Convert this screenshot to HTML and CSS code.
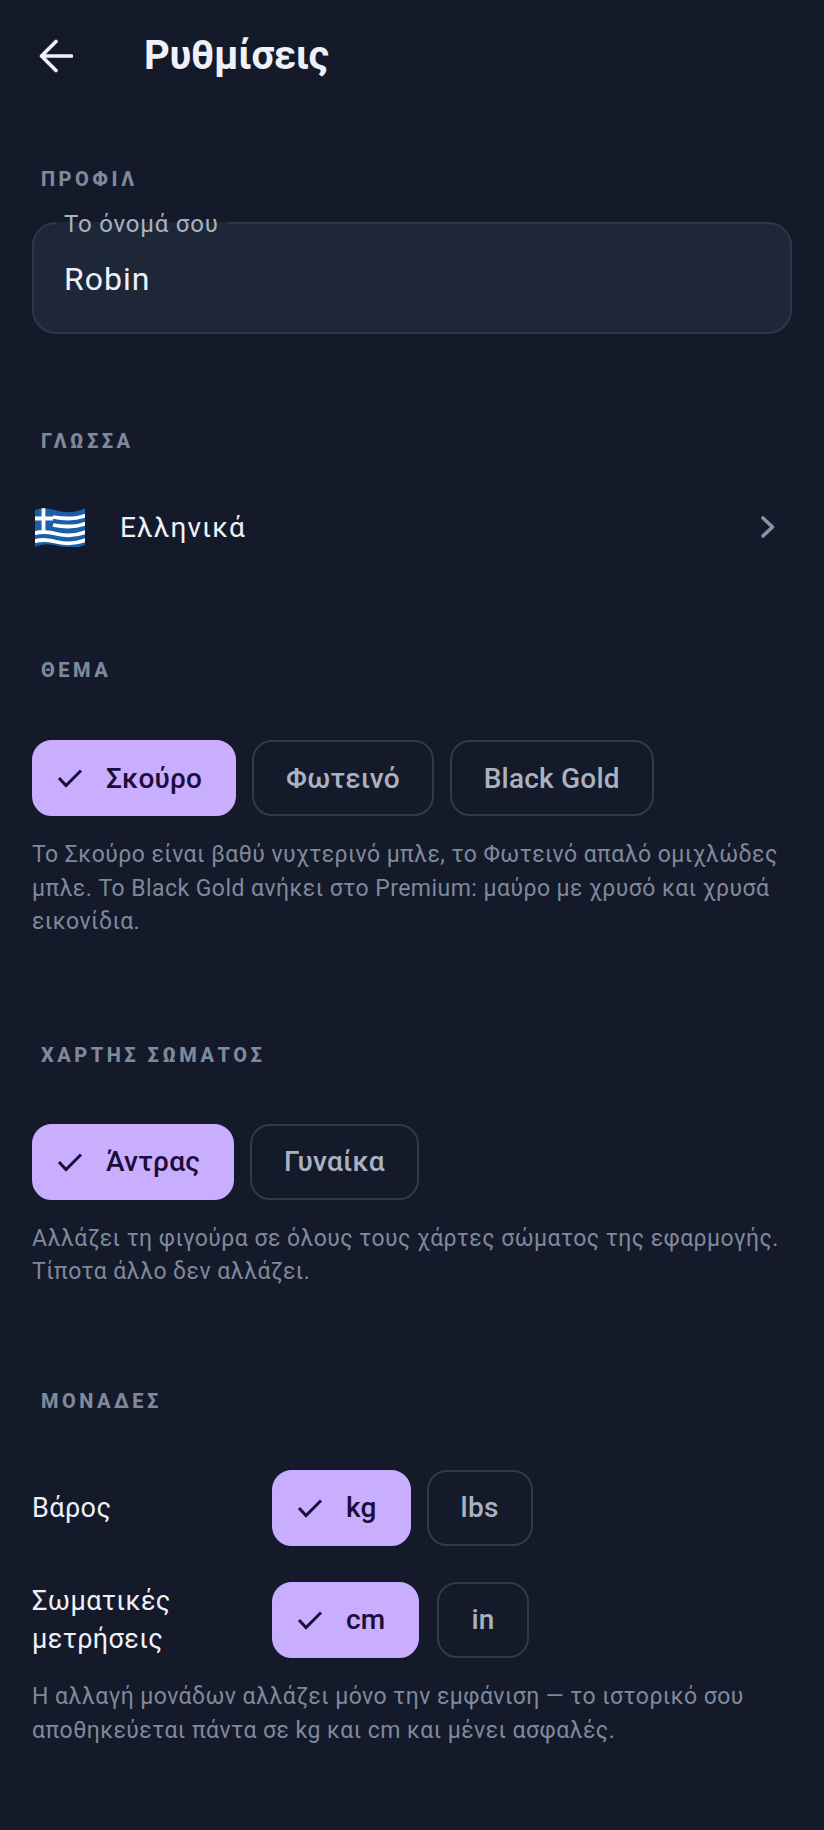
FILE: index.html
```html
<!DOCTYPE html>
<html lang="el">
<head>
<meta charset="utf-8">
<title>Ρυθμίσεις</title>
<link rel="stylesheet" href="styles.css">
</head>
<body>
<header class="topbar">
  <svg class="back" viewBox="0 0 34 34" width="34" height="34"><path d="M32.500 17H3.500M17 2.500L2.500 17L17 31.500" fill="none" stroke="#eef1fa" stroke-width="3.600" stroke-linecap="round" stroke-linejoin="round"/></svg>
  <h1 class="title">Ρυθμίσεις</h1>
</header>
<main>
  <section class="sec sec-profile">
    <h2 class="head">ΠΡΟΦΙΛ</h2>
    <fieldset class="field">
      <legend class="legend">Το όνομά σου</legend>
      <div class="value">Robin</div>
    </fieldset>
  </section>
  <section class="sec sec-lang">
    <h2 class="head">ΓΛΩΣΣΑ</h2>
    <div class="lang">
      <svg class="flag" viewBox="0 0 50 39" width="50" height="39">
        <defs><clipPath id="fl"><path d="M0 2C8 -1 14 0 22 2.500S40 5 50 0V37C40 41 32 40 24 38S8 35 0 39Z"/></clipPath></defs>
        <g clip-path="url(#fl)">
          <rect width="50" height="39" fill="#1a5fa8"/>
          <g fill="none" stroke="#fff" stroke-width="3.800">
            <path d="M18 9C26 10.500 40 12 52 7"/>
            <path d="M18 17C26 18.500 40 20 52 15"/>
            <path d="M-2 25.500C8 23 14 24 22 26S40 28.500 52 23.500"/>
            <path d="M-2 33.500C8 31 14 32 22 34S40 36.500 52 31.500"/>
          </g>
          <path d="M8.500 0V22M0 10.500H18" fill="none" stroke="#fff" stroke-width="3.800"/>
        </g>
      </svg>
      <span class="lang-name">Ελληνικά</span>
      <svg class="chev" viewBox="0 0 16 24" width="16" height="24"><path d="M3 3L12.500 12L3 21" fill="none" stroke="#8a93a5" stroke-width="3.600" stroke-linecap="round" stroke-linejoin="round"/></svg>
    </div>
  </section>
  <section class="sec sec-theme">
    <h2 class="head">ΘΕΜΑ</h2>
    <div class="chips">
      <div class="chip on"><svg class="check" viewBox="0 0 26 20" width="26" height="20"><path d="M2 10L9 17.500L24 2.500" fill="none" stroke="#1d0d3a" stroke-width="3"/></svg>Σκούρο</div>
      <div class="chip">Φωτεινό</div>
      <div class="chip">Black Gold</div>
    </div>
    <p class="help">Το Σκούρο είναι βαθύ νυχτερινό μπλε, το Φωτεινό απαλό ομιχλώδες μπλε. Το Black Gold ανήκει στο Premium: μαύρο με χρυσό και χρυσά εικονίδια.</p>
  </section>
  <section class="sec sec-body">
    <h2 class="head">ΧΑΡΤΗΣ ΣΩΜΑΤΟΣ</h2>
    <div class="chips">
      <div class="chip on"><svg class="check" viewBox="0 0 26 20" width="26" height="20"><path d="M2 10L9 17.500L24 2.500" fill="none" stroke="#1d0d3a" stroke-width="3"/></svg>Άντρας</div>
      <div class="chip">Γυναίκα</div>
    </div>
    <p class="help">Αλλάζει τη φιγούρα σε όλους τους χάρτες σώματος της εφαρμογής. Τίποτα άλλο δεν αλλάζει.</p>
  </section>
  <section class="sec sec-units">
    <h2 class="head">ΜΟΝΑΔΕΣ</h2>
    <div class="unit">
      <div class="unit-label">Βάρος</div>
      <div class="chips">
        <div class="chip on unit-chip"><svg class="check" viewBox="0 0 26 20" width="26" height="20"><path d="M2 10L9 17.500L24 2.500" fill="none" stroke="#1d0d3a" stroke-width="3"/></svg>kg</div>
        <div class="chip unit-chip">lbs</div>
      </div>
    </div>
    <div class="unit">
      <div class="unit-label">Σωματικές μετρήσεις</div>
      <div class="chips chips-wide">
        <div class="chip on unit-chip"><svg class="check" viewBox="0 0 26 20" width="26" height="20"><path d="M2 10L9 17.500L24 2.500" fill="none" stroke="#1d0d3a" stroke-width="3"/></svg>cm</div>
        <div class="chip unit-chip">in</div>
      </div>
    </div>
    <p class="help">Η αλλαγή μονάδων αλλάζει μόνο την εμφάνιση — το ιστορικό σου αποθηκεύεται πάντα σε kg και cm και μένει ασφαλές.</p>
  </section>
</main>
</body>
</html>
```
FILE: styles.css
```css
* { box-sizing: border-box; }
html, body { margin: 0; height: 100%; }
body {
  background: #141a29;
  font-family: Roboto, "Noto Sans", sans-serif;
  color: #eef1fa;
  overflow: hidden;
}
.topbar {
  display: flex;
  align-items: center;
  height: 112px;
  padding-left: 39px;
}
.back { flex: none; }
.title {
  margin: 0 0 0 71px;
  font-size: 40px;
  font-weight: 700;
  line-height: 48px;
  letter-spacing: -0.4px;
}
main { padding: 0 32px; }
.head {
  margin: 0;
  padding-left: 9px;
  font-size: 20px;
  line-height: 28px;
  font-weight: 800;
  letter-spacing: 3.500px;
  color: #7f899c;
}
.sec-profile { padding-top: 53px; }
.sec-lang { padding-top: 93px; }
.sec-theme { padding-top: 87px; }
.sec-body { padding-top: 102px; }
.sec-units { padding-top: 98px; }
.field {
  margin: 14px 0 0;
  padding: 0 30px;
  height: 127px;
  border: 2px solid #2f3747;
  border-radius: 24px;
  background: #1e2737;
}
.legend {
  margin-left: -8px;
  padding: 3px 8px 1px;
  font-size: 24px;
  line-height: 28px;
  letter-spacing: 0.8px;
  color: #aab2c1;
}
.value {
  padding-top: 18px;
  font-size: 32px;
  line-height: 44px;
  letter-spacing: 1px;
}
.lang {
  display: flex;
  align-items: center;
  margin-top: 30px;
  height: 84px;
  padding: 0 16px 0 3px;
}
.lang-name {
  flex: 1;
  margin-left: 35px;
  font-size: 28px;
  letter-spacing: 1.100px;
}
.flag, .chev, .check { flex: none; }
.chips { display: flex; gap: 16px; }
.chips-wide { gap: 18px; }
.sec-theme > .chips { margin-top: 56px; }
.sec-body > .chips { margin-top: 55px; }
.chip {
  display: flex;
  align-items: center;
  height: 76px;
  padding: 0 32px;
  border: 2px solid #323a4a;
  border-radius: 20px;
  font-size: 28px;
  font-weight: 500;
  letter-spacing: 0.2px;
  color: #a9b2c1;
}
.chip.on {
  padding-left: 23px;
  border-color: #c9aeff;
  background: #c9aeff;
  color: #1d0d3a;
  font-weight: 480;
  letter-spacing: 0.2px;
}
.check { margin-right: 23px; }
.help {
  margin: 22px 0 0;
  font-size: 23px;
  line-height: 33.600px;
  letter-spacing: 0.45px;
  color: #7f899c;
}
.unit {
  display: flex;
  align-items: center;
  height: 76px;
  margin-top: 36px;
}
.sec-units > .unit:nth-of-type(1) { margin-top: 55px; }
.unit-label {
  flex: none;
  width: 240px;
  font-size: 27px;
  line-height: 38px;
  letter-spacing: 0.4px;
}
```
